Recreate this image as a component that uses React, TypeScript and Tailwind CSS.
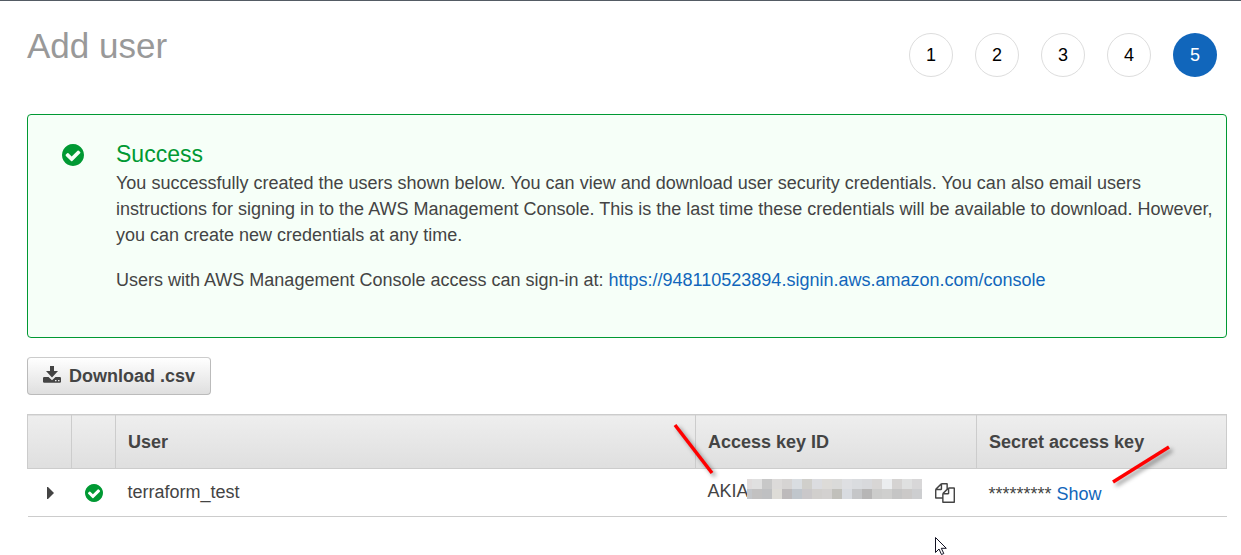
import React from "react";

const steps = [1, 2, 3, 4, 5];
const currentStep = 5;

const mosaic = [
  ["#e0dcdc", "#e0e0e0", "#c8c8c8", "#dcdad9", "#d6d4d3", "#d9dde1", "#d0cfcb", "#dbdce0", "#dddbd8", "#dadad9", "#dedfe2", "#dadcdf", "#d8d9dc", "#d8d6d5", "#ebedef", "#d5d3d2", "#dfe0e0", "#d8d7d8"],
  ["#c3c6ca", "#c2c1c1", "#bfc0c2", "#dedcd7", "#bdbabb", "#c0c6cc", "#cac8ca", "#d1cfcd", "#d3d1d0", "#c1c0bb", "#d8dbe0", "#c5c6c8", "#b7b6b6", "#cccccb", "#cfcfce", "#c5c5c5", "#cbc9c8", "#cdced0"],
];

function CheckCircle({ className }: { className: string }) {
  return (
    <svg viewBox="128 128 1536 1536" className={className} aria-hidden="true">
      <path
        fill="#009933"
        d="M1412 734q0-28-18-46l-91-90q-19-19-45-19t-45 19l-408 407-226-226q-19-19-45-19t-45 19l-91 90q-18 18-18 46 0 27 18 45l362 362q19 19 45 19 27 0 46-19l543-543q18-18 18-45zm252 162q0 209-103 385.5t-279.5 279.5-385.5 103-385.5-103-279.5-279.5-103-385.5 103-385.5 279.5-279.5 385.5-103 385.5 103 279.5 279.5 103 385.5z"
      />
    </svg>
  );
}

function DownloadIcon() {
  return (
    <svg viewBox="0 0 18 17" className="h-[17px] w-[18px]" fill="#444" aria-hidden="true">
      <path d="M7 0h4v5h4L9 11.400 3 5h4z" />
      <path
        fillRule="evenodd"
        d="M.8 11h4.700L9 14.200l3.500-3.200h4.700l.8.8v4.200l-.8.8H.8L0 16v-4.200zM12 14v1.300h1.500V14zm3 0v1.300h1.500V14z"
      />
    </svg>
  );
}

function CopyIcon() {
  return (
    <svg viewBox="0 0 1792 1792" className="h-5 w-5" fill="#444" aria-hidden="true">
      <path d="M1696 384q40 0 68 28t28 68v1216q0 40-28 68t-68 28h-960q-40 0-68-28t-28-68v-288h-544q-40 0-68-28t-28-68v-672q0-40 20-88t48-76l408-408q28-28 76-48t88-20h416q40 0 68 28t28 68v328q68-40 128-40h416zm-544 213l-299 299h299v-299zm-640-384l-299 299h299v-299zm196 647l316-316v-416h-384v416q0 40-28 68t-68 28h-416v640h512v-256q0-40 20-88t48-76zm956 804v-1152h-384v416q0 40-28 68t-68 28h-416v640h896z" />
    </svg>
  );
}

function Marker({ className, d, viewBox }: { className: string; d: string; viewBox: string }) {
  return (
    <svg viewBox={viewBox} className={className} fill="none" aria-hidden="true">
      <path d={d} stroke="#ff0000" strokeWidth="3.500" />
    </svg>
  );
}

function Steps() {
  return (
    <ol className="flex gap-[22px] pr-[10px]">
      {steps.map((n) => (
        <li
          key={n}
          aria-current={n === currentStep ? "step" : undefined}
          className={
            n === currentStep
              ? "flex h-11 w-11 items-center justify-center rounded-full bg-[#1166bb] text-white"
              : "flex h-11 w-11 items-center justify-center rounded-full border border-[#ddd] text-black"
          }
        >
          {n}
        </li>
      ))}
    </ol>
  );
}

export default function App() {
  return (
    <main className="border-t border-[#545b64] bg-white pr-[14px] pb-[38px] pl-[27px] font-['Liberation_Sans',Arial,sans-serif] text-[18px] leading-[26px] text-[#444]">
      <header className="flex items-start justify-between pt-8">
        <h1 className="-mt-2 text-[35px] leading-[42px] text-[#999]">Add user</h1>
        <Steps />
      </header>

      <section className="mt-[37px] flex rounded border border-[#009933] bg-[#f6fff8] pt-6 pr-2 pb-11 pl-[34px]">
        <CheckCircle className="mt-[5px] mr-8 h-[22px] w-[22px] shrink-0" />
        <div>
          <h2 className="text-[23px] leading-[31px] text-[#009933]">Success</h2>
          <p>
            You successfully created the users shown below. You can view and download user security credentials. You
            can also email users instructions for signing in to the AWS Management Console. This is the last time these
            credentials will be available to download. However, you can create new credentials at any time.
          </p>
          <p className="mt-[19px]">
            Users with AWS Management Console access can sign-in at:{" "}
            <a href="https://948110523894.signin.aws.amazon.com/console" className="text-[#1166bb]">
              https://948110523894.signin.aws.amazon.com/console
            </a>
          </p>
        </div>
      </section>

      <button
        type="button"
        className="mt-[19px] flex h-[38px] items-center gap-2 rounded border border-[#bbb] border-t-[#ccc] bg-linear-to-b from-white to-[#dfdfdf] px-[15px] font-bold"
      >
        <span className="pb-1">
          <DownloadIcon />
        </span>
        Download .csv
      </button>

      <table className="mt-[19px] w-full table-fixed border-collapse text-left">
        <colgroup>
          <col className="w-11" />
          <col className="w-11" />
          <col />
          <col className="w-[281px]" />
          <col className="w-[250px]" />
        </colgroup>
        <thead>
          <tr className="h-[54px] border border-[#ccc] bg-linear-to-b from-[#eee] to-[#dfdfdf]">
            <th className="border-r border-[#ccc]" aria-label="Expand" />
            <th className="border-r border-[#ccc]" aria-label="Status" />
            <th className="border-r border-[#ccc] px-3">User</th>
            <th className="relative border-r border-[#ccc] px-3">
              Access key ID
              <Marker
                className="absolute top-[7px] -left-[25px] z-10 h-14 w-12 drop-shadow-[3px_3px_2px_rgba(0,0,0,0.4)]"
                viewBox="0 0 48 56"
                d="M4 3L41 51"
              />
            </th>
            <th className="relative px-3">
              Secret access key
              <Marker
                className="absolute top-7 left-[132px] z-10 h-11 w-16 drop-shadow-[3px_3px_2px_rgba(0,0,0,0.4)]"
                viewBox="0 0 64 44"
                d="M4 39L60 4"
              />
            </th>
          </tr>
        </thead>
        <tbody>
          <tr className="h-12 border-b border-[#ccc]">
            <td>
              <button type="button" aria-label="Expand terraform_test" className="flex w-full justify-center pl-0.5">
                <svg viewBox="0 0 7 12" className="h-3 w-[7px]" fill="#444" aria-hidden="true">
                  <path d="M0 0h1l6 6-6 6H0z" />
                </svg>
              </button>
            </td>
            <td>
              <CheckCircle className="mx-auto h-[18px] w-[18px]" />
            </td>
            <td className="px-3 pb-0.5">terraform_test</td>
            <td className="relative px-3">
              <div className="flex items-center">
                <span className="pb-1">AKIA</span>
                <span className="-ml-0.5 mb-2 flex h-5 w-[175px] flex-col" aria-hidden="true">
                  {mosaic.map((row, r) => (
                    <span key={r} className="flex flex-1">
                      {row.map((color, c) => (
                        <span key={c} className={c === 0 ? "w-[5px]" : "w-[10px]"} style={{ backgroundColor: color }} />
                      ))}
                    </span>
                  ))}
                </span>
                <button type="button" aria-label="Copy access key ID" className="ml-[13px]">
                  <CopyIcon />
                </button>
              </div>
              <svg
                viewBox="0 0 12 19"
                className="absolute top-[68px] left-[239px] h-[19px] w-3"
                aria-hidden="true"
              >
                <path d="M.5.5v15l3.500-3.500 2.500 5.500 2.300-1-2.500-5.200h5z" fill="#fff" stroke="#111122" />
              </svg>
            </td>
            <td className="px-3 pt-0.5">
              <span>*********</span>{" "}
              <button type="button" className="text-[#1166bb]">
                Show
              </button>
            </td>
          </tr>
        </tbody>
      </table>
    </main>
  );
}
